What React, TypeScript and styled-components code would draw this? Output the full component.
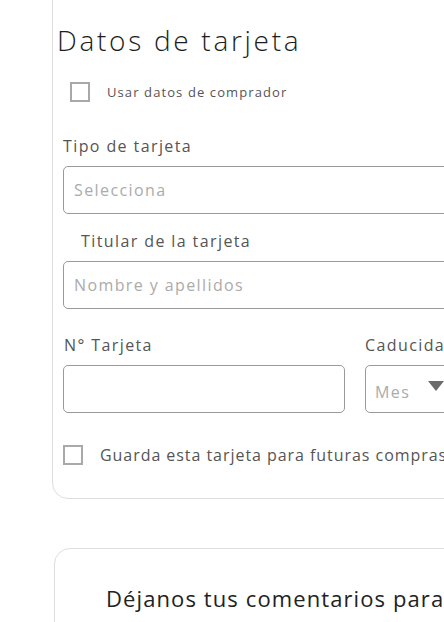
import React from "react";
import styled, { createGlobalStyle } from "styled-components";

const GlobalStyle = createGlobalStyle`
  html, body {
    margin: 0;
    padding: 0;
    background: #fff;
    overflow: hidden;
  }
  body {
    font-family: "Open Sans", "DejaVu Sans", sans-serif;
    color: #555;
  }
`;

const Page = styled.div`
  width: 444px;
  height: 622px;
  overflow: hidden;
  position: relative;
`;

const Card = styled.section<{ $left: number }>`
  box-sizing: border-box;
  margin-left: ${(p) => p.$left}px;
  width: 460px;
  border: 1px solid #dedede;
  border-radius: 16px;
  background: #fff;
`;

const PaymentCard = styled(Card)`
  margin-top: -20px;
  padding: 40px 0 32px 0;
`;

const CommentCard = styled(Card)`
  margin-top: 49px;
  padding: 34px 0 0 51px;
  height: 120px;
`;

const Title = styled.h2`
  margin: 0 0 0 4px;
  font-size: 28px;
  line-height: 38px;
  font-weight: 300;
  letter-spacing: 2.7px;
  color: #1d1d1d;
`;

const CheckRow = styled.label<{ $indent: number; $top: number }>`
  display: flex;
  align-items: center;
  gap: 17px;
  margin: ${(p) => p.$top}px 0 0 ${(p) => p.$indent}px;
  height: 22px;
`;

const Box = styled.span`
  box-sizing: border-box;
  width: 20px;
  height: 20px;
  border: 2px solid #a9a9a9;
  flex: none;
`;

const CheckText = styled.span<{ $size: number }>`
  font-size: ${(p) => p.$size}px;
  letter-spacing: ${(p) => (p.$size > 14 ? 0.95 : 1.1)}px;
  color: #555;
  white-space: nowrap;
`;

const Field = styled.div<{ $top?: number }>`
  display: flex;
  flex-direction: column;
  margin-top: ${(p) => p.$top ?? 0}px;
`;

const Label = styled.div<{ $shift?: number }>`
  font-size: 16px;
  line-height: 22px;
  letter-spacing: 1.4px;
  color: #555;
  margin: 0 0 9px ${(p) => p.$shift ?? 0}px;
  white-space: nowrap;
`;

const Input = styled.div<{ $width?: number }>`
  box-sizing: border-box;
  height: 48px;
  width: ${(p) => (p.$width ? `${p.$width}px` : "420px")};
  border: 1px solid #9a9a9a;
  border-radius: 5px;
  display: flex;
  align-items: center;
  padding: 0 10px;
  font-size: 16px;
  letter-spacing: 1.4px;
  color: #ababab;
  white-space: nowrap;
`;

const Form = styled.div`
  display: flex;
  flex-direction: column;
  padding-left: 10px;
`;

const Row = styled.div<{ $top: number }>`
  display: flex;
  gap: 20px;
  margin-top: ${(p) => p.$top}px;
`;

const Select = styled(Input)`
  padding-top: 6px;
  padding-left: 9px;
  gap: 18px;
`;

const Caret = styled.span`
  width: 0;
  height: 0;
  border-left: 8px solid transparent;
  border-right: 8px solid transparent;
  border-top: 10px solid #6b6b6b;
  margin-top: -12px;
`;

const CommentTitle = styled.h3`
  margin: 0;
  font-size: 22px;
  font-weight: 400;
  letter-spacing: 1.1px;
  color: #222;
  white-space: nowrap;
  line-height: 30px;
`;

export default function App() {
  return (
    <Page>
      <GlobalStyle />
      <PaymentCard $left={52}>
        <Title>Datos de tarjeta</Title>
        <CheckRow $indent={17} $top={22}>
          <Box />
          <CheckText $size={13}>Usar datos de comprador</CheckText>
        </CheckRow>
        <Form>
          <Field $top={32}>
            <Label $shift={0}>Tipo de tarjeta</Label>
            <Input>Selecciona</Input>
          </Field>
          <Field $top={16}>
            <Label $shift={18}>Titular de la tarjeta</Label>
            <Input>Nombre y apellidos</Input>
          </Field>
          <Row $top={25}>
            <Field>
              <Label $shift={1}>N° Tarjeta</Label>
              <Input $width={282} />
            </Field>
            <Field>
              <Label $shift={0}>Caducidad</Label>
              <Select $width={120}>
                Mes
                <Caret />
              </Select>
            </Field>
          </Row>
        </Form>
        <CheckRow $indent={10} $top={31}>
          <Box />
          <CheckText $size={16}>Guarda esta tarjeta para futuras compras</CheckText>
        </CheckRow>
      </PaymentCard>
      <CommentCard $left={54}>
        <CommentTitle>Déjanos tus comentarios para ayudarnos</CommentTitle>
      </CommentCard>
    </Page>
  );
}
